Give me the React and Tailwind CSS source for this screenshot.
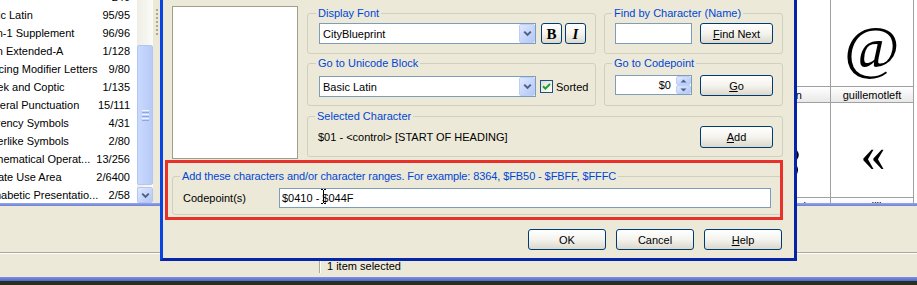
import React from "react";

function Chevron({ color = "#4d6185" }) {
  return (
    <svg width="9" height="7" viewBox="0 0 9 7">
      <path d="M1.2 1.6 L4.5 4.9 L7.8 1.6" stroke={color} strokeWidth="2" fill="none" />
    </svg>
  );
}

function DropBtn() {
  return (
    <div className="flex h-full w-[16px] items-center justify-center rounded-[2px] border border-[#bccff8] bg-linear-to-br from-[#dfe8fe] to-[#b3c7f6]">
      <Chevron />
    </div>
  );
}

function Combo({ value }) {
  return (
    <div className="flex h-[21px] w-[217px] items-stretch border border-[#7f9db9] bg-white">
      <div className="flex flex-1 items-center pl-[3px]">{value}</div>
      <DropBtn />
    </div>
  );
}

function Btn({ children, className = "" }) {
  return (
    <div
      className={`flex items-center justify-center rounded-[3px] border border-[#003c74] bg-linear-to-b from-white via-[#f4f3ee] to-[#dcd8cb] ${className}`}
    >
      {children}
    </div>
  );
}

function Group({ title, className = "", children }) {
  return (
    <fieldset className={`m-0 min-w-0 rounded-[3px] border border-[#d0d0bf] ${className}`}>
      <legend className="ml-[-3px] px-[2px] leading-[14px] text-[#0046d5]">{title}</legend>
      {children}
    </fieldset>
  );
}

const rows = [
  ["", "240"],
  ["Basic Latin", "95/95"],
  ["Latin-1 Supplement", "96/96"],
  ["Latin Extended-A", "1/128"],
  ["Spacing Modifier Letters", "9/80"],
  ["Greek and Coptic", "1/135"],
  ["General Punctuation", "15/111"],
  ["Currency Symbols", "4/31"],
  ["Letterlike Symbols", "2/80"],
  ["Mathematical Operat...", "13/256"],
  ["Private Use Area", "2/6400"],
  ["Alphabetic Presentatio...", "2/58"],
];

function ListPane() {
  return (
    <div className="w-[137px] overflow-hidden bg-white">
      <div className="-mt-[12px]">
        {rows.map(([name, count], i) => (
          <div key={i} className="flex h-[18px] items-center pr-[7px]">
            <span className="-ml-[21px] flex-1 whitespace-nowrap">{name}</span>
            <span className="whitespace-nowrap">{count}</span>
          </div>
        ))}
      </div>
    </div>
  );
}

function ScrollBar() {
  return (
    <div className="flex w-[16px] flex-col bg-linear-to-r from-[#eeede5] to-[#fbfbf8]">
      <div className="h-[45px] shrink-0" />
      <div className="flex h-[140px] shrink-0 flex-col items-center justify-center gap-[1px] rounded-[2px] border border-[#b3c6f3] bg-linear-to-r from-[#cad9fd] to-[#b7cbf8]">
        <div className="h-px w-[7px] bg-[#eef3fe]" />
        <div className="h-px w-[7px] bg-[#8ca6e6]" />
        <div className="h-px w-[7px] bg-[#eef3fe]" />
        <div className="h-px w-[7px] bg-[#8ca6e6]" />
        <div className="h-px w-[7px] bg-[#eef3fe]" />
        <div className="h-px w-[7px] bg-[#8ca6e6]" />
      </div>
      <div className="flex-1" />
      <div className="flex h-[16px] shrink-0 items-center justify-center rounded-[2px] border border-[#b3c6f3] bg-linear-to-br from-[#dfe8fe] to-[#b3c7f6]">
        <Chevron />
      </div>
    </div>
  );
}

function GlyphCol({ top, label, glyph, label2, shift = "" }) {
  return (
    <div className="flex w-[83px] flex-col border-r border-[#a0a0a0]">
      <div className="flex h-[86px] shrink-0 items-center justify-center pt-[8px] font-['Liberation_Serif',serif] text-[60px] leading-none">
        {top}
      </div>
      <div className={`flex h-[17px] shrink-0 items-center justify-center border-y border-[#a0a0a0] bg-linear-to-b from-white to-[#e8e8e8] ${shift}`}>
        {label}
      </div>
      <div className="flex h-[94px] shrink-0 items-center justify-center pl-[2px] pt-[8px] font-['Liberation_Serif',serif] text-[50px] leading-none">
        {glyph}
      </div>
      <div className={`flex h-[17px] shrink-0 items-center justify-center border-t border-[#a0a0a0] bg-linear-to-b from-white to-[#e8e8e8] ${shift}`}>
        {label2}
      </div>
    </div>
  );
}

function Background() {
  return (
    <div className="flex h-[285px] flex-col">
      <div className="flex h-[203px] shrink-0 overflow-hidden">
        <ListPane />
        <ScrollBar />
        <div className="flex w-[7px] justify-center bg-[#ece9d8] pt-[9px]">
          <div className="h-[26px] w-0 border-l-2 border-dotted border-[#aaa796]" />
        </div>
        <div className="flex flex-1 items-start bg-white">
          <div className="w-[588px]" />
          <GlyphCol top="" label="section" glyph="§" label2="paragraph" shift="pr-[9px]" />
          <GlyphCol top="@" label="guillemotleft" glyph="«" label2="cedilla" />
          <div className="flex-1" />
        </div>
      </div>
      <div className="h-[3px] shrink-0 bg-linear-to-b from-[#97a7e8] to-[#6c80d8]" />
      <div className="h-[46px] shrink-0 bg-[#ece9d8]" />
      <div className="h-px shrink-0 bg-[#aca899]" />
      <div className="h-px shrink-0 bg-white" />
      <div className="flex h-[23px] shrink-0 items-center bg-[#ece9d8]">
        <div className="ml-[319px] h-[15px] w-[2px] border-l border-r border-l-[#aca899] border-r-white" />
        <span className="ml-[6px]">1 item selected</span>
      </div>
      <div className="h-[4px] shrink-0 bg-linear-to-b from-[#7f91e0] to-[#5467cf]" />
      <div className="h-[4px] shrink-0 bg-[#28311d]" />
    </div>
  );
}

function Dialog() {
  return (
    <div className="absolute left-[160px] top-0 h-[261px] w-[637px] border-b-[3px] border-l-[3px] border-r-[3px] border-b-[#0526a8] border-l-[#0845e0] border-r-[#0524a4] bg-[#ece9d8]">
      <div className="flex flex-col pl-[9px] pr-[11px] pt-[6px]">
        <div className="flex items-start">
          <div className="h-[153px] w-[126px] border border-[#a19e8e] bg-white" />
          <div className="ml-[9px] grid w-[476px] grid-cols-[289px_179px] gap-x-[8px] gap-y-[2px]">
            <Group title="Display Font" className="pb-[9px] pl-[11px]">
              <div className="mt-[3px] flex items-center">
                <Combo value="CityBlueprint" />
                <Btn className="ml-[5px] h-[21px] w-[21px] font-['Liberation_Serif',serif] text-[15px] font-bold">B</Btn>
                <Btn className="ml-[3px] h-[21px] w-[21px] font-['Liberation_Serif',serif] text-[15px] font-bold italic">I</Btn>
              </div>
            </Group>
            <Group title="Find by Character (Name)" className="pb-[9px] pl-[10px]">
              <div className="mt-[3px] flex items-center">
                <div className="h-[21px] w-[77px] border border-[#7f9db9] bg-white" />
                <Btn className="ml-[8px] h-[21px] w-[73px]">
                  <span>
                    <span className="underline underline-offset-[1px]">F</span>ind Next
                  </span>
                </Btn>
              </div>
            </Group>
            <Group title="Go to Unicode Block" className="pb-[8px] pl-[11px]">
              <div className="mt-[6px] flex items-center">
                <Combo value="Basic Latin" />
                <div className="ml-[4px] flex h-[13px] w-[13px] items-center justify-center border border-[#1c5180] bg-linear-to-br from-[#dcdcd7] to-white">
                  <svg width="9" height="9" viewBox="0 0 9 9">
                    <path d="M1 4.2 L3.4 6.6 L8 2" stroke="#21a121" strokeWidth="2" fill="none" />
                  </svg>
                </div>
                <span className="ml-[3px]">Sorted</span>
              </div>
            </Group>
            <Group title="Go to Codepoint" className="pb-[8px] pl-[10px]">
              <div className="mt-[5px] flex items-start">
                <div className="flex h-[20px] w-[77px] items-stretch border border-[#7f9db9] bg-white">
                  <div className="flex flex-1 items-center justify-end pr-[5px]">$0</div>
                  <div className="flex w-[15px] flex-col">
                    <div className="flex flex-1 items-center justify-center rounded-[2px] border border-[#bccff8] bg-linear-to-br from-[#dfe8fe] to-[#b3c7f6]">
                      <svg width="7" height="4" viewBox="0 0 7 4">
                        <path d="M0.5 3.5 L3.5 0.5 L6.5 3.5 Z" fill="#4d6185" />
                      </svg>
                    </div>
                    <div className="flex flex-1 items-center justify-center rounded-[2px] border border-[#bccff8] bg-linear-to-br from-[#dfe8fe] to-[#b3c7f6]">
                      <svg width="7" height="4" viewBox="0 0 7 4">
                        <path d="M0.5 0.5 L3.5 3.5 L6.5 0.5 Z" fill="#4d6185" />
                      </svg>
                    </div>
                  </div>
                </div>
                <Btn className="ml-[8px] h-[21px] w-[73px]">
                  <span>
                    <span className="underline underline-offset-[1px]">G</span>o
                  </span>
                </Btn>
              </div>
            </Group>
            <Group title="Selected Character" className="col-span-2 mt-[1px] pb-[8px] pl-[10px] pr-[9px]">
              <div className="mt-[3px] flex items-center justify-between">
                <span>$01 - &lt;control&gt; [START OF HEADING]</span>
                <Btn className="h-[22px] w-[73px]">
                  <span>
                    <span className="underline underline-offset-[1px]">A</span>dd
                  </span>
                </Btn>
              </div>
            </Group>
          </div>
        </div>

        <Group
          title="Add these characters and/or character ranges. For example: 8364, $FB50 - $FBFF, $FFFC"
          className="mr-[1px] mt-[10px] pb-[6px] pl-[10px] pr-[10px] tracking-[-0.1px]"
        >
          <div className="mt-[5px] flex items-center tracking-normal">
            <span className="w-[96px]">Codepoint(s)</span>
            <div className="flex h-[20px] w-[492px] items-center border border-[#7f9db9] bg-white pl-[2px]">
              $0410 - $044F
            </div>
          </div>
        </Group>

        <div className="mr-[1px] mt-[14px] flex justify-end gap-[10px]">
          <Btn className="h-[21px] w-[78px]">OK</Btn>
          <Btn className="h-[21px] w-[78px]">Cancel</Btn>
          <Btn className="h-[21px] w-[78px]">
            <span>
              <span className="underline underline-offset-[1px]">H</span>elp
            </span>
          </Btn>
        </div>
      </div>
    </div>
  );
}

export default function App() {
  return (
    <div className="relative h-[285px] w-[917px] overflow-hidden bg-[#ece9d8] font-['Liberation_Sans',Arial,sans-serif] text-[11px] leading-[14px] text-black">
      <Background />
      <Dialog />
      <div className="pointer-events-none absolute left-[165px] top-[160px] h-[60px] w-[618px] border-[3px] border-[#e8312a]" />
      <svg className="absolute left-[320px] top-[189px]" width="7" height="15" viewBox="0 0 7 15">
        <path d="M1 0.5 H3 M4 0.5 H6 M3.5 1 V14 M1 14.5 H3 M4 14.5 H6" stroke="#000" strokeWidth="1" fill="none" />
      </svg>
    </div>
  );
}
